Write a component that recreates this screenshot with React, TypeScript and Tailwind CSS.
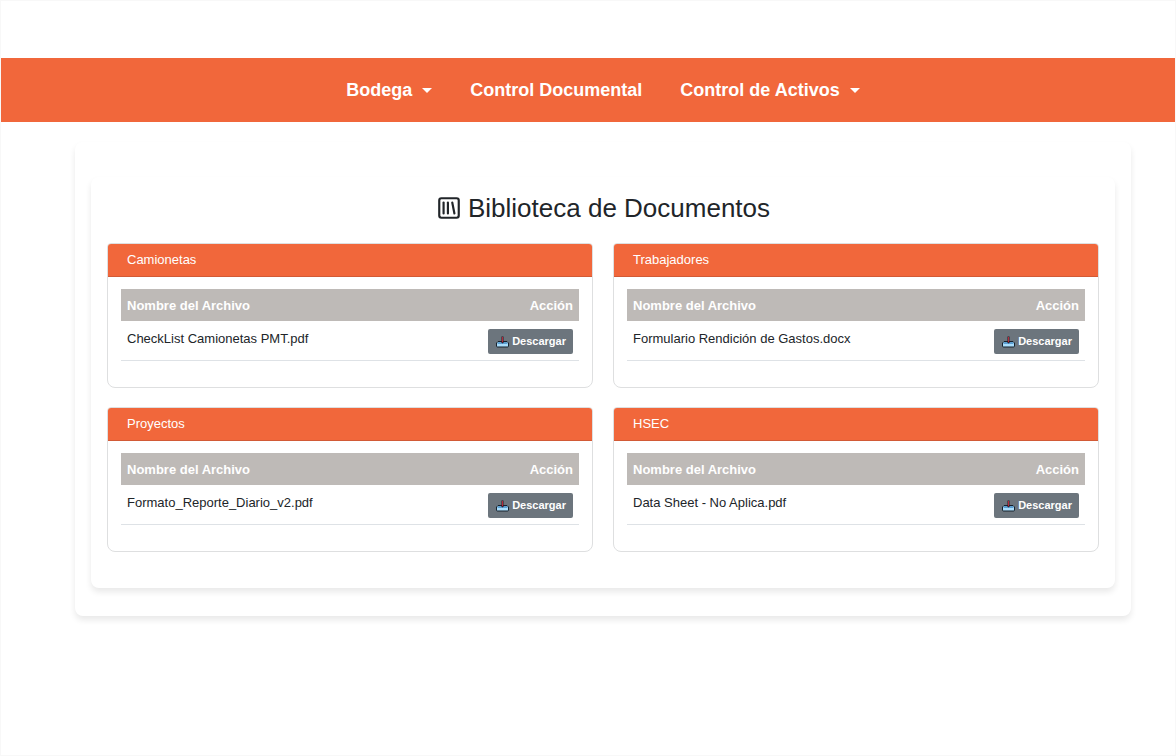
import React from 'react';
import { SquareLibrary } from 'lucide-react';

type Section = { title: string; files: string[] };

const sections: Section[] = [
  { title: 'Camionetas', files: ['CheckList Camionetas PMT.pdf'] },
  { title: 'Trabajadores', files: ['Formulario Rendición de Gastos.docx'] },
  { title: 'Proyectos', files: ['Formato_Reporte_Diario_v2.pdf'] },
  { title: 'HSEC', files: ['Data Sheet - No Aplica.pdf'] },
];

function Caret() {
  return (
    <svg className="ml-2.5 h-[5px] w-2.5" viewBox="0 0 10 5" fill="currentColor" aria-hidden="true">
      <path d="M0 0h10L5 5z" />
    </svg>
  );
}

function InboxTray() {
  return (
    <svg className="h-[13px] w-[13px]" viewBox="0 0 13 13" aria-hidden="true">
      <path d="M2 6.500h9l1.500 1.500v3q0 1-1 1h-10q-1 0-1-1V8z" fill="#a9dcfa" stroke="#17222d" strokeWidth="1" />
      <path d="M2.300 7h8.400l1 2H1.300z" fill="#5b9fd2" />
      <path d="M5.500 1.500h2v4.500h1.500l-2.500 2.500L4 6h1.500z" fill="#2a1a24" />
      <path d="M6 2h1v5l-.5.500L6 7z" fill="#b52a3c" />
    </svg>
  );
}

function Card({ title, files }: Section) {
  return (
    <section className="overflow-hidden rounded-t-sm rounded-b-lg border border-[#dedfe0] bg-white">
      <h2 className="border-b border-[#d25a36] bg-[#f1673b] px-[19px] py-1.5 text-[13px] leading-5 text-white">
        {title}
      </h2>
      <div className="px-[13px] pt-3 pb-[26px]">
        <table className="w-full border-collapse text-[13px] leading-5">
          <thead className="bg-[#bebab7] text-white">
            <tr>
              <th className="px-1.5 pt-[7px] pb-[5px] text-left font-bold">Nombre del Archivo</th>
              <th className="px-1.5 pt-[7px] pb-[5px] text-right font-bold">Acción</th>
            </tr>
          </thead>
          <tbody>
            {files.map((file) => (
              <tr key={file} className="border-b border-[#dee2e6]">
                <td className="px-1.5 py-2 align-top">{file}</td>
                <td className="px-1.5 pt-2 pb-1.5 text-right">
                  <button
                    type="button"
                    className="inline-flex h-[25px] items-center gap-[3px] rounded-xs bg-[#6c757d] pr-[7px] pb-px pl-2 align-top text-[11px] leading-4 font-bold text-white"
                  >
                    <InboxTray />
                    Descargar
                  </button>
                </td>
              </tr>
            ))}
          </tbody>
        </table>
      </div>
    </section>
  );
}

export default function App() {
  return (
    <div className="min-h-screen border border-[#f8f8f8] bg-white pt-[57px] font-['Liberation_Sans',Arial,sans-serif] text-[#212529]">
      <nav className="bg-[#f1673b] pr-11 pl-[74px] text-lg leading-6 font-bold text-white">
        <ul className="flex h-16 items-center justify-center gap-[38px]">
          <li>
            <button type="button" className="flex items-center">
              Bodega
              <Caret />
            </button>
          </li>
          <li>
            <a href="#documental">Control Documental</a>
          </li>
          <li>
            <button type="button" className="flex items-center">
              Control de Activos
              <Caret />
            </button>
          </li>
        </ul>
      </nav>
      <div className="pt-5 pr-11 pl-[74px]">
        <div className="rounded-lg bg-white px-4 pt-[35px] pb-7 shadow-[0_4px_6px_rgba(0,0,0,0.09)]">
          <main className="rounded-lg bg-white px-4 pt-[15px] pb-9 shadow-[0_4px_6px_rgba(0,0,0,0.09)]">
            <h1 className="flex items-center justify-center gap-1.5 text-[26px] leading-8">
              <SquareLibrary size={26} strokeWidth={2} aria-hidden="true" />
              Biblioteca de Documentos
            </h1>
            <div className="mt-[19px] grid grid-cols-2 gap-x-5 gap-y-[19px]">
              {sections.map((section) => (
                <Card key={section.title} {...section} />
              ))}
            </div>
          </main>
        </div>
      </div>
    </div>
  );
}
